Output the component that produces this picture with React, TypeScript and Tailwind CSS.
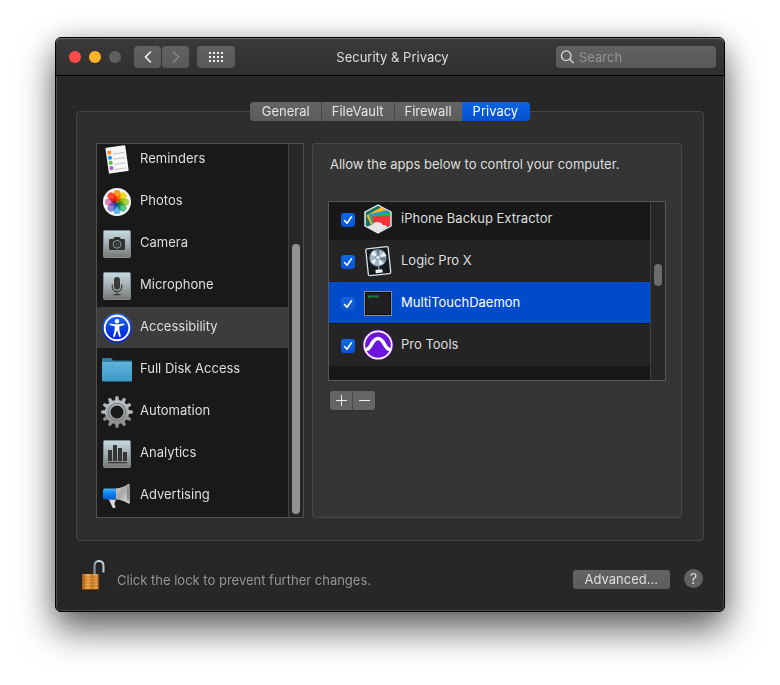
import { useState } from "react";
import type { ReactNode } from "react";
import clsx from "clsx";

const TABS = ["General", "FileVault", "Firewall", "Privacy"];

const PETALS = [
  "#ff9a1e",
  "#f7d820",
  "#a5d23c",
  "#5cc489",
  "#5fb4ee",
  "#8f86d8",
  "#d982bd",
  "#ff4a3a",
];

function RemindersIcon() {
  const dots = ["#ff8c1a", "#1a9df5", "#55cc33", "#b55fe0"];
  return (
    <svg viewBox="0 0 32 32" className="size-8" aria-hidden="true">
      <g transform="rotate(-8 16 15)">
        <rect x="6" y="2.5" width="20" height="26" rx="1" fill="#f7f7f7" />
        {dots.map((color, i) => (
          <g key={color}>
            <circle cx="9.2" cy={7.6 + i * 5.2} r="2.1" fill={color} />
            <path d={`M12.5 ${9.5 + i * 5.2}H24`} stroke="#b9b9b9" strokeWidth="0.8" />
          </g>
        ))}
      </g>
    </svg>
  );
}

function PhotosIcon() {
  return (
    <svg viewBox="0 0 32 32" className="size-8" aria-hidden="true">
      <circle cx="16" cy="16" r="14" fill="#f6f6f6" />
      <g className="isolate">
        {PETALS.map((color, i) => (
          <rect
            key={color}
            x="12.4"
            y="4"
            width="7.2"
            height="11.6"
            rx="3.6"
            fill={color}
            className="mix-blend-multiply"
            transform={`rotate(${i * 45} 16 16)`}
          />
        ))}
      </g>
    </svg>
  );
}

function Tile({ children }: { children: ReactNode }) {
  return (
    <svg viewBox="0 0 32 32" className="size-8" aria-hidden="true">
      <defs>
        <linearGradient id="tile" x1="0" y1="0" x2="0" y2="1">
          <stop offset="0" stopColor="#c5dbe2" />
          <stop offset="0.5" stopColor="#a3adb0" />
          <stop offset="1" stopColor="#777776" />
        </linearGradient>
      </defs>
      <rect x="2.5" y="2.5" width="27" height="27" rx="1.2" fill="url(#tile)" stroke="#7f8b91" />
      {children}
    </svg>
  );
}

function CameraIcon() {
  return (
    <Tile>
      <path
        d="M9.2 11h3l1.3-2h5.2l1.3 2h2.8a1.2 1.2 0 0 1 1.2 1.2v8.6a1.2 1.2 0 0 1-1.2 1.2H9.2A1.2 1.2 0 0 1 8 20.8V12.2A1.2 1.2 0 0 1 9.2 11z"
        fill="#303030"
      />
      <circle cx="16" cy="16.3" r="3.9" fill="#2a2a2a" stroke="#8f999c" />
      <circle cx="16" cy="16.3" r="2.4" fill="#3f3f3f" />
    </Tile>
  );
}

function MicrophoneIcon() {
  return (
    <Tile>
      <rect x="13" y="7" width="6" height="12.5" rx="3" fill="#3a3a3a" />
      <path
        d="M11.3 14.5V17a4.7 4.7 0 0 0 9.4 0v-2.5M16 22v2.3M12.5 24.6h7"
        fill="none"
        stroke="#3a3a3a"
        strokeWidth="1.2"
      />
    </Tile>
  );
}

function AnalyticsIcon() {
  return (
    <Tile>
      <path
        d="M7 12h4v11H7zM12 7h4v16h-4zM17 10h4v13h-4zM22 14h4v9h-4zM7 24h19v1.2H7z"
        fill="#353535"
      />
    </Tile>
  );
}

function AccessibilityIcon() {
  return (
    <svg viewBox="0 0 32 32" className="size-8" aria-hidden="true">
      <defs>
        <linearGradient id="access" x1="0" y1="0" x2="0" y2="1">
          <stop offset="0" stopColor="#2c6cf0" />
          <stop offset="0.5" stopColor="#0642dc" />
          <stop offset="1" stopColor="#0618e8" />
        </linearGradient>
      </defs>
      <circle cx="16" cy="16" r="14.8" fill="url(#access)" />
      <circle cx="16" cy="16" r="12.3" fill="none" stroke="#fff" strokeWidth="1.9" />
      <circle cx="16" cy="9.3" r="2.2" fill="#fff" />
      <path
        d="M8.8 11.4l5.2.8h4l5.2-.8.2 1.5-5 1.3v4l1.6 6.3-1.7.5L16.3 19h-.6l-2 6-1.7-.5 1.6-6.3v-4l-5-1.3z"
        fill="#fff"
      />
    </svg>
  );
}

function FolderIcon() {
  return (
    <svg viewBox="0 0 32 32" className="size-8" aria-hidden="true">
      <defs>
        <linearGradient id="folder" x1="0" y1="0" x2="0" y2="1">
          <stop offset="0" stopColor="#5cb2da" />
          <stop offset="1" stopColor="#3c9ac8" />
        </linearGradient>
      </defs>
      <path d="M1 4.8q0-.8.8-.8h8.400l2 2.500h18q.8 0 .8.8V12H1z" fill="#2f7fa3" />
      <path d="M1 8.500h30v18.300q0 .7-.7.7H1.700q-.7 0-.7-.7z" fill="url(#folder)" />
      <path d="M1 8.700h30" stroke="#8accea" strokeWidth="0.6" />
    </svg>
  );
}

function GearIcon() {
  return (
    <svg viewBox="0 0 32 32" className="size-8" aria-hidden="true">
      <defs>
        <linearGradient id="gear" x1="0" y1="0" x2="0" y2="32" gradientUnits="userSpaceOnUse">
          <stop offset="0" stopColor="#c4cdd0" />
          <stop offset="1" stopColor="#858585" />
        </linearGradient>
      </defs>
      <circle cx="16" cy="16" r="9.3" fill="none" stroke="url(#gear)" strokeWidth="5.6" />
      {Array.from({ length: 12 }, (_, i) => (
        <path
          key={i}
          d="M13.9 5l.7-4.7h2.8l.7 4.7z"
          fill={i > 3 && i < 9 ? "#8e8f90" : "#b4bbbe"}
          transform={`rotate(${i * 30} 16 16)`}
        />
      ))}
      <circle cx="16" cy="16" r="8.7" fill="none" stroke="#777b7d" strokeWidth="1.1" />
    </svg>
  );
}

function MegaphoneIcon() {
  return (
    <svg viewBox="0 0 32 32" className="size-8" aria-hidden="true">
      <defs>
        <linearGradient id="horn" x1="0" y1="0" x2="1" y2="1">
          <stop offset="0" stopColor="#dadada" />
          <stop offset="0.45" stopColor="#a6a6a6" />
          <stop offset="1" stopColor="#e6e6e6" />
        </linearGradient>
        <linearGradient id="grip" x1="0" y1="0" x2="0" y2="1">
          <stop offset="0" stopColor="#44b4ff" />
          <stop offset="0.5" stopColor="#0a7cf2" />
          <stop offset="1" stopColor="#0a5fc8" />
        </linearGradient>
      </defs>
      <path d="M7.5 19l4.5 9.300 2.700-.7-1.300-3.800 1.600-4.300z" fill="#d8d8d8" />
      <path d="M14.500 8.500Q22 8 27.500 3.800q1.200-.2 1.200.8v18.200q0 1.100-1.200.8Q22 19.800 14.500 19.500z" fill="url(#horn)" />
      <ellipse cx="27" cy="13.700" rx="1.100" ry="8" fill="#8a8a8a" />
      <path d="M4 8.600h10.500q1.500 5.500 0 11H4Q2 19.600 2 17.600v-7q0-2 2-2z" fill="url(#grip)" />
    </svg>
  );
}

function BackupIcon() {
  return (
    <svg viewBox="0 0 32 32" className="size-8" aria-hidden="true">
      <path
        d="M16 2l13 7v14l-13 7-13-7V9z"
        fill="#15756e"
        stroke="#f4f4f4"
        strokeWidth="1.4"
        strokeLinejoin="round"
      />
      <path d="M4.500 12.500L19.500 4l5 3-1 12-14 4z" fill="#fab81c" />
      <path d="M6.500 11.500l18.500-4.500 1.500 13-15 4z" fill="#2a94e0" />
      <path d="M8.500 12.200L28 9.500v12l-16.500 3z" fill="#1cb65c" />
      <path d="M10.500 14.200q0-.9.900-.9H28v9.500l-15.500 2z" fill="#f2333c" />
      <path
        d="M5.500 24q1.500-2.200 4.700-1.800 1-3 5-3.200 4 0 5.600 3 3.200-.2 4.700 2L16 29.500z"
        fill="#e6e6e6"
      />
    </svg>
  );
}

function LogicIcon() {
  return (
    <svg viewBox="0 0 32 32" className="size-8" aria-hidden="true">
      <g transform="rotate(-6 16 16)">
        <rect x="5" y="2.7" width="22.5" height="27" rx="1.3" fill="#14181c" stroke="#dbe2e8" strokeWidth="1.3" />
        <circle cx="16.3" cy="12.7" r="8.8" fill="#a3b6c8" stroke="#39424b" />
        <path
          d="M16.3 12.700L9.500 8.500 13 5zM16.300 12.700l6.500-5 2 4zM16.300 12.700l5 6.500-4 1.300zM16.300 12.700l-7.500 2.800 2.500 3.500z"
          fill="#e9f0f5"
        />
        <path d="M16.300 12.700l-1-8 3.500.3zM16.300 12.700l8 .5-1.200 4z" fill="#68798c" />
        <circle cx="16.300" cy="12.700" r="2.3" fill="#dce5ec" stroke="#65788c" strokeWidth="0.7" />
        <rect x="12.500" y="24.500" width="7" height="3.500" rx="0.5" fill="#eef1f3" />
        <path d="M16 21.500v3" stroke="#9aa5ae" strokeWidth="1.4" />
      </g>
    </svg>
  );
}

function ExecIcon() {
  return (
    <svg viewBox="0 0 32 32" className="size-8" aria-hidden="true">
      <rect x="2.5" y="4.5" width="27" height="24" fill="#202020" stroke="#8b8b8b" />
      <rect x="3.5" y="5.5" width="25" height="22" fill="none" stroke="#0c0c0c" />
      <path d="M6 9.500h10.500" stroke="#1d9b3c" strokeWidth="2" strokeDasharray="2 0.8" />
    </svg>
  );
}

function ProToolsIcon() {
  return (
    <svg viewBox="0 0 32 32" className="size-8" aria-hidden="true">
      <circle cx="16" cy="16" r="15.3" fill="#6d14df" />
      <circle cx="16" cy="16" r="13.7" fill="none" stroke="#fff" strokeWidth="1.7" />
      <path
        d="M3.500 20.500C9.500 21 9.500 9.500 16 9.500s6.500 11.500 12.500 11"
        fill="none"
        stroke="#fff"
        strokeWidth="3.6"
      />
    </svg>
  );
}

function LockIcon() {
  return (
    <svg viewBox="0 0 34 34" className="size-[34px]" aria-hidden="true">
      <defs>
        <linearGradient id="brass" x1="0" y1="0" x2="1" y2="0">
          <stop offset="0" stopColor="#a85812" />
          <stop offset="0.35" stopColor="#f3b14f" />
          <stop offset="0.6" stopColor="#cf7e28" />
          <stop offset="0.85" stopColor="#eda850" />
          <stop offset="1" stopColor="#8e4308" />
        </linearGradient>
        <linearGradient id="shackle" x1="0" y1="0" x2="1" y2="0">
          <stop offset="0" stopColor="#8398a4" />
          <stop offset="0.5" stopColor="#dce9f0" />
          <stop offset="1" stopColor="#b9cad4" />
        </linearGradient>
      </defs>
      <path d="M18.500 16V8q0-5 4.500-5t4.500 5v6.500" fill="none" stroke="url(#shackle)" strokeWidth="2" />
      <rect x="6" y="16" width="17" height="16" rx="0.8" fill="url(#brass)" />
      <path
        d="M6 19h17M6 22h17M6 25h17M6 28h17"
        stroke="#9b5112"
        strokeOpacity="0.55"
        strokeWidth="0.8"
      />
      <path d="M6 31.500h17" stroke="#7c3a08" />
    </svg>
  );
}

const CATEGORIES = [
  { name: "Reminders", icon: <RemindersIcon /> },
  { name: "Photos", icon: <PhotosIcon /> },
  { name: "Camera", icon: <CameraIcon /> },
  { name: "Microphone", icon: <MicrophoneIcon /> },
  { name: "Accessibility", icon: <AccessibilityIcon /> },
  { name: "Full Disk Access", icon: <FolderIcon /> },
  { name: "Automation", icon: <GearIcon /> },
  { name: "Analytics", icon: <AnalyticsIcon /> },
  { name: "Advertising", icon: <MegaphoneIcon /> },
];

const APPS = [
  { id: "backup", name: "iPhone Backup Extractor", icon: <BackupIcon /> },
  { id: "logic", name: "Logic Pro X", icon: <LogicIcon /> },
  { id: "multitouch", name: "MultiTouchDaemon", icon: <ExecIcon /> },
  { id: "protools", name: "Pro Tools", icon: <ProToolsIcon /> },
];

function TitleBar() {
  const navButton =
    "grid h-[22px] place-items-center rounded bg-linear-to-b from-[#616161] to-[#595959]";
  return (
    <header className="grid h-[38px] grid-cols-[1fr_auto_1fr] items-center rounded-t-[5px] border-b border-black bg-linear-to-b from-[#3a3a3a] to-[#303030] pt-px pr-2 pl-[13px] shadow-[inset_0_1px_0_#6a6a6a]">
      <div className="flex items-center">
        <div className="flex gap-2">
          <button aria-label="Close" className="size-3 rounded-full bg-[#ff4a4a]" />
          <button aria-label="Minimize" className="size-3 rounded-full bg-[#ffb42c]" />
          <button aria-label="Zoom" disabled className="size-3 rounded-full bg-[#606060]" />
        </div>
        <div className="ml-[13px] flex gap-px">
          <button aria-label="Back" className={clsx(navButton, "w-[27px]")}>
            <svg viewBox="0 0 8 14" className="h-[14px] w-2" fill="none" stroke="#f0f0f0" strokeWidth="1.6">
              <path d="M7 1.500L1.500 7 7 12.500" />
            </svg>
          </button>
          <button aria-label="Forward" disabled className={clsx(navButton, "w-[27px]")}>
            <svg viewBox="0 0 8 14" className="h-[14px] w-2" fill="none" stroke="#868686" strokeWidth="1.5">
              <path d="M1 1.500L6.500 7 1 12.500" />
            </svg>
          </button>
        </div>
        <button aria-label="Show All" className={clsx(navButton, "ml-2 w-[38px]")}>
          <svg viewBox="0 0 14 10" className="h-[10px] w-[14px]" fill="#f0f0f0" shapeRendering="crispEdges">
            {[0, 4, 8].map((y) =>
              [0, 4, 8, 12].map((x) => <rect key={`${x}-${y}`} x={x} y={y} width="2" height="2" />),
            )}
          </svg>
        </button>
      </div>
      <h1 className="text-[13px] text-[#dfdfdf]">Security &amp; Privacy</h1>
      <label className="flex h-[22px] w-40 items-center gap-[5px] justify-self-end rounded bg-linear-to-b from-[#616161] to-[#595959] px-1">
        <svg viewBox="0 0 14 14" className="size-[14px] shrink-0" fill="none" stroke="#e2e2e2" strokeWidth="1.2">
          <circle cx="6.2" cy="5.7" r="4.8" />
          <path d="M9.700 9.200l3.800 3.800" />
        </svg>
        <input
          type="search"
          aria-label="Search"
          placeholder="Search"
          className="w-full min-w-0 bg-transparent text-[13px] text-white outline-none placeholder:text-[#949494]"
        />
      </label>
    </header>
  );
}

function Tabs() {
  const [active, setActive] = useState("Privacy");
  return (
    <div
      role="tablist"
      className="relative z-10 -mb-[10px] flex self-center rounded bg-[#4a4a4a] text-[13px] text-[#e4e4e4]"
    >
      {TABS.map((tab) => (
        <button
          key={tab}
          role="tab"
          aria-selected={tab === active}
          onClick={() => setActive(tab)}
          className={clsx(
            "h-[19px] border-l border-[#484848] px-[10px] leading-[19px] first:rounded-l first:border-l-0 first:pr-[11px] first:pl-3 last:rounded-r last:border-l-0 last:pr-3 last:pl-[11px]",
            tab === active
              ? "bg-linear-to-b from-[#0a64e6] to-[#0451cc] text-white"
              : "bg-linear-to-b from-[#646464] to-[#5c5c5c]",
          )}
        >
          {tab}
        </button>
      ))}
    </div>
  );
}

function CategoryList() {
  const [selected, setSelected] = useState("Accessibility");
  return (
    <nav className="flex h-[375px] w-52 shrink-0 border border-[#505050] bg-[#191919]">
      <ul className="flex flex-1 flex-col justify-end overflow-hidden">
        {CATEGORIES.map(({ name, icon }) => (
          <li key={name} className="shrink-0 border-b border-[#191919]">
            <button
              onClick={() => setSelected(name)}
              className={clsx(
                "flex h-[41px] w-full items-center gap-[7px] pl-1 text-left",
                name === selected && "bg-[#3c3c3c]",
              )}
            >
              {icon}
              <span className="pb-[3px]">{name}</span>
            </button>
          </li>
        ))}
      </ul>
      <div className="flex w-[15px] flex-col justify-end border-l border-[#404040] bg-[#272727] px-[3px] pb-[3px]">
        <div className="h-[73%] rounded-full bg-[#939393]" />
      </div>
    </nav>
  );
}

function AppList() {
  const [selected, setSelected] = useState("multitouch");
  return (
    <div className="flex h-[180px] border border-[#565656] bg-[#181818]">
      <ul className="-mt-1 flex flex-1 flex-col [clip-path:inset(4px_0_0_0)]">
        {APPS.map(({ id, name, icon }) => (
          <li
            key={id}
            onClick={() => setSelected(id)}
            className={clsx(
              "flex h-[42px] items-center gap-[7px] border-b pl-3",
              id === selected
                ? "border-[#181818] bg-[#004bca] bg-clip-padding text-white"
                : "border-transparent odd:bg-[#181818] even:bg-[#242424]",
            )}
          >
            <span className="grid place-items-center pt-0.5">
              <input
                id={id}
                type="checkbox"
                defaultChecked
                className={clsx(
                  "peer col-start-1 row-start-1 size-[14px] appearance-none rounded-[3px] bg-[#555] checked:bg-linear-to-b",
                  id === selected
                    ? "checked:from-[#1663dc] checked:to-[#0a55cf]"
                    : "checked:from-[#0a68ec] checked:to-[#0654d2]",
                )}
              />
              <svg
                viewBox="0 0 14 14"
                className="pointer-events-none invisible col-start-1 row-start-1 size-[14px] peer-checked:visible"
                fill="none"
                stroke="#fff"
                strokeWidth="1.6"
                strokeLinecap="round"
                strokeLinejoin="round"
                aria-hidden="true"
              >
                <path d="M3.500 7.500L6 10.200 10.500 3.800" />
              </svg>
            </span>
            {icon}
            <label htmlFor={id} className="pb-px">
              {name}
            </label>
          </li>
        ))}
      </ul>
      <div className="w-[15px] border-l border-[#404040] bg-[#272727] px-[3px] pt-[62px]">
        <div className="h-[22px] rounded-full bg-[#6c6c6c]" />
      </div>
    </div>
  );
}

function AppsPanel() {
  return (
    <section className="min-w-0 flex-1 rounded-[3px] border border-[#484848] bg-[#353535] px-[15px] pt-[10px]">
      <h2 className="mb-[27px] ml-0.5">Allow the apps below to control your computer.</h2>
      <AppList />
      <div className="mt-[10px] ml-0.5 inline-flex gap-px rounded-[3px] bg-[#4c4c4c] shadow-sm">
        <button
          aria-label="Add"
          className="grid h-[19px] w-[22px] place-items-center rounded-l-[3px] bg-[#656565]"
        >
          <svg viewBox="0 0 11 11" className="size-[11px]" stroke="#f0f0f0" shapeRendering="crispEdges">
            <path d="M0 5.500h11M5.500 0v11" />
          </svg>
        </button>
        <button
          aria-label="Remove"
          className="grid h-[19px] w-[22px] place-items-center rounded-r-[3px] bg-[#656565]"
        >
          <svg viewBox="0 0 11 11" className="size-[11px]" stroke="#f0f0f0" shapeRendering="crispEdges">
            <path d="M0 5.500h11" />
          </svg>
        </button>
      </div>
    </section>
  );
}

function Footer() {
  return (
    <footer className="flex items-center pt-[17px] pr-px pb-[19px]">
      <button aria-label="Lock" className="rounded bg-[#252525]">
        <LockIcon />
      </button>
      <p className="mt-[9px] ml-[7px] flex-1 text-[#959595]">
        Click the lock to prevent further changes.
      </p>
      <button className="mt-2 h-[19px] rounded-[3px] bg-linear-to-b from-[#646464] to-[#5c5c5c] px-3 leading-[19px]">
        Advanced...
      </button>
      <button
        aria-label="Help"
        className="mt-1.5 ml-[14px] size-[19px] rounded-full bg-[#616161] text-[14px] leading-[19px]"
      >
        ?
      </button>
    </footer>
  );
}

export default function App() {
  return (
    <div className="min-h-screen bg-white px-[55px] pt-[37px] pb-[73px] font-['Inter','Liberation_Sans',sans-serif] text-[13px] leading-5 text-[#dfdfdf]">
      <main className="rounded-md border border-black bg-[#272727] shadow-[0_18px_36px_rgba(0,0,0,0.6),0_0_24px_rgba(0,0,0,0.15),inset_0_0_0_1px_#4d4d4d]">
        <TitleBar />
        <div className="flex flex-col px-5 pt-[26px]">
          <Tabs />
          <div className="flex gap-2 rounded border border-[#454545] bg-[#2e2e2e] pt-[31px] pr-[21px] pb-[22px] pl-[19px]">
            <CategoryList />
            <AppsPanel />
          </div>
          <Footer />
        </div>
      </main>
    </div>
  );
}
